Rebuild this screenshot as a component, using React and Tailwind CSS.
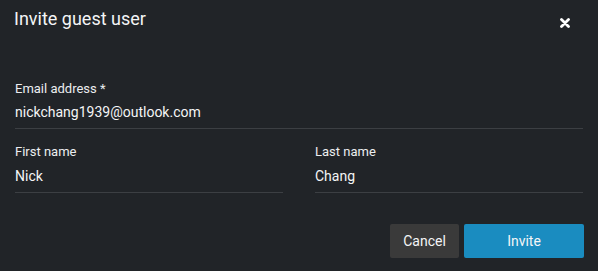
export default function App() {
  return (
    <div className="w-[598px] h-[271px] bg-[#212428] text-white flex flex-col" style={{ fontFamily: "Roboto, 'Liberation Sans', sans-serif" }}>
      <div className="flex justify-between items-start pl-[14px] pr-[28px] pt-[7px]">
        <h1 className="text-[18px] leading-[24px] font-normal text-[#f4f5f6]">Invite guest user</h1>
        <button className="mt-[11px] w-[10px] h-[10px]">
          <svg width="10" height="10" viewBox="0 0 10 10">
            <path d="M1.5 1.5 L8.5 8.5 M8.5 1.5 L1.5 8.5" stroke="#ffffff" strokeWidth="2.8" strokeLinecap="round" />
          </svg>
        </button>
      </div>
      <div className="px-[15px] mt-[50px] flex flex-col">
        <label className="text-[13px] leading-[16px] text-[#eceef0]">Email address *</label>
        <div className="mt-[5px] text-[14px] leading-[20px] text-[#f4f5f6] pb-[6px] border-b border-[#3c3f43]">nickchang1939@outlook.com</div>
      </div>
      <div className="px-[15px] mt-[15px] grid grid-cols-2 gap-[32px]">
        <div className="flex flex-col">
          <label className="text-[13px] leading-[16px] text-[#eceef0]">First name</label>
          <div className="mt-[6px] text-[14px] leading-[20px] text-[#f4f5f6] pb-[6px] border-b border-[#3c3f43]">Nick</div>
        </div>
        <div className="flex flex-col">
          <label className="text-[13px] leading-[16px] text-[#eceef0]">Last name</label>
          <div className="mt-[6px] text-[14px] leading-[20px] text-[#f4f5f6] pb-[6px] border-b border-[#3c3f43]">Chang</div>
        </div>
      </div>
      <div className="flex justify-end gap-[5px] pr-[14px] mt-[31px]">
        <button className="w-[69px] h-[34px] rounded-[2px] bg-[#3a3a3a] text-[14px] text-[#f4f5f6]">Cancel</button>
        <button className="w-[120px] h-[34px] rounded-[2px] bg-[#1a8cc0] text-[14px] text-[#f4f5f6]">Invite</button>
      </div>
    </div>
  );
}
